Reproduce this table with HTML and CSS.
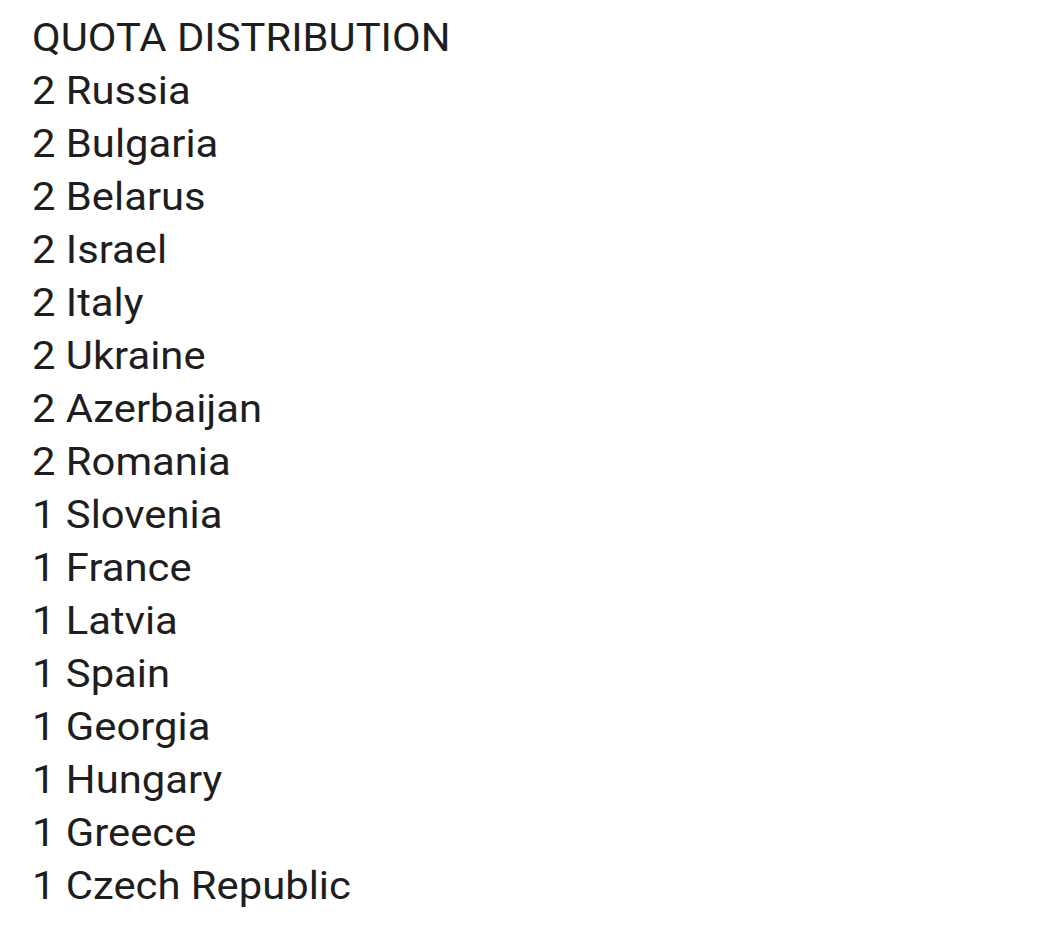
FILE: index.html
```html
<!DOCTYPE html>
<html>
<head>
<meta charset="utf-8">
<link rel="stylesheet" href="styles.css">
</head>
<body>
<div class="list">
  <div class="row">QUOTA DISTRIBUTION</div>
  <div class="row">2 Russia</div>
  <div class="row">2 Bulgaria</div>
  <div class="row">2 Belarus</div>
  <div class="row">2 Israel</div>
  <div class="row">2 Italy</div>
  <div class="row">2 Ukraine</div>
  <div class="row">2 Azerbaijan</div>
  <div class="row">2 Romania</div>
  <div class="row">1 Slovenia</div>
  <div class="row">1 France</div>
  <div class="row">1 Latvia</div>
  <div class="row">1 Spain</div>
  <div class="row">1 Georgia</div>
  <div class="row">1 Hungary</div>
  <div class="row">1 Greece</div>
  <div class="row">1 Czech Republic</div>
</div>
</body>
</html>
```
FILE: styles.css
```css
html, body {
  margin: 0;
  background: #fff;
}
.list {
  width: fit-content;
  margin-left: 32px;
  padding-top: 11px;
  font-family: Roboto, "Liberation Sans", sans-serif;
  font-size: 38.5px;
  line-height: 53px;
  color: #1e1e1e;
  transform: scaleX(1.085);
  transform-origin: 0 0;
}
```
